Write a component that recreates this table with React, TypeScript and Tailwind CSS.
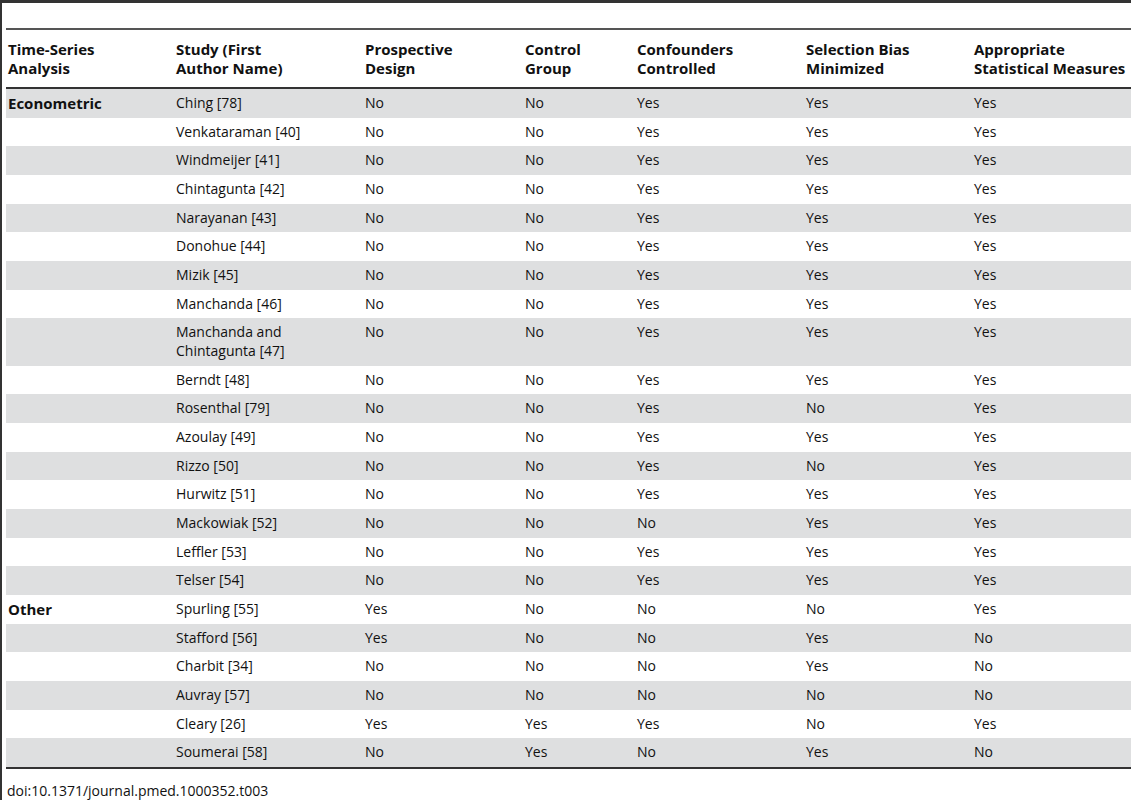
import React from "react";

type Row = { group?: string; study: string; cells: string[] };

const rows: Row[] = [
  { group: "Econometric", study: "Ching [78]", cells: ["No", "No", "Yes", "Yes", "Yes"] },
  { study: "Venkataraman [40]", cells: ["No", "No", "Yes", "Yes", "Yes"] },
  { study: "Windmeijer [41]", cells: ["No", "No", "Yes", "Yes", "Yes"] },
  { study: "Chintagunta [42]", cells: ["No", "No", "Yes", "Yes", "Yes"] },
  { study: "Narayanan [43]", cells: ["No", "No", "Yes", "Yes", "Yes"] },
  { study: "Donohue [44]", cells: ["No", "No", "Yes", "Yes", "Yes"] },
  { study: "Mizik [45]", cells: ["No", "No", "Yes", "Yes", "Yes"] },
  { study: "Manchanda [46]", cells: ["No", "No", "Yes", "Yes", "Yes"] },
  { study: "Manchanda and Chintagunta [47]", cells: ["No", "No", "Yes", "Yes", "Yes"] },
  { study: "Berndt [48]", cells: ["No", "No", "Yes", "Yes", "Yes"] },
  { study: "Rosenthal [79]", cells: ["No", "No", "Yes", "No", "Yes"] },
  { study: "Azoulay [49]", cells: ["No", "No", "Yes", "Yes", "Yes"] },
  { study: "Rizzo [50]", cells: ["No", "No", "Yes", "No", "Yes"] },
  { study: "Hurwitz [51]", cells: ["No", "No", "Yes", "Yes", "Yes"] },
  { study: "Mackowiak [52]", cells: ["No", "No", "No", "Yes", "Yes"] },
  { study: "Leffler [53]", cells: ["No", "No", "Yes", "Yes", "Yes"] },
  { study: "Telser [54]", cells: ["No", "No", "Yes", "Yes", "Yes"] },
  { group: "Other", study: "Spurling [55]", cells: ["Yes", "No", "No", "No", "Yes"] },
  { study: "Stafford [56]", cells: ["Yes", "No", "No", "Yes", "No"] },
  { study: "Charbit [34]", cells: ["No", "No", "No", "Yes", "No"] },
  { study: "Auvray [57]", cells: ["No", "No", "No", "No", "No"] },
  { study: "Cleary [26]", cells: ["Yes", "Yes", "Yes", "No", "Yes"] },
  { study: "Soumerai [58]", cells: ["No", "Yes", "No", "Yes", "No"] },
];

const headers = [
  ["Time-Series", "Analysis"],
  ["Study (First", "Author Name)"],
  ["Prospective", "Design"],
  ["Control", "Group"],
  ["Confounders", "Controlled"],
  ["Selection Bias", "Minimized"],
  ["Appropriate", "Statistical Measures"],
];

const grid = "grid grid-cols-[168px_189px_160px_112px_169px_168px_1fr]";

export default function App() {
  return (
    <div className="w-[1131px] h-[800px] bg-white flex font-['Open_Sans',sans-serif] text-[14px] text-[#111] overflow-hidden">
      <div className="w-[2px] bg-[#333] shrink-0" />
      <div className="flex-1 ml-[4px] flex flex-col">
        <div className="h-[3px] bg-[#333] -ml-[4px]" />
        <div className="h-[26px]" />
        <div className="h-[2px] bg-[#555]" />
        <div className={`${grid} border-b-2 border-[#333] pt-[10px] pb-[9px]`}>
          {headers.map((h, i) => (
            <div key={i} className="pl-[2px] font-bold text-[15px] leading-[19px]">
              <div>{h[0]}</div>
              <div>{h[1]}</div>
            </div>
          ))}
        </div>
        {rows.map((r, i) => (
          <div key={i} className={`${grid} ${i % 2 === 0 ? "bg-[#dedfe0]" : "bg-white"} py-[5px] leading-[18.67px]`}>
            <div className="pl-[2px] font-bold text-[15px]">{r.group ?? ""}</div>
            <div className="pl-[2px] pr-[40px]">{r.study}</div>
            {r.cells.map((c, j) => (
              <div key={j} className="pl-[2px]">{c}</div>
            ))}
          </div>
        ))}
        <div className="h-[2px] bg-[#333]" />
        <div className="pt-[12px] pl-[1px] leading-[19px]">doi:10.1371/journal.pmed.1000352.t003</div>
      </div>
    </div>
  );
}
